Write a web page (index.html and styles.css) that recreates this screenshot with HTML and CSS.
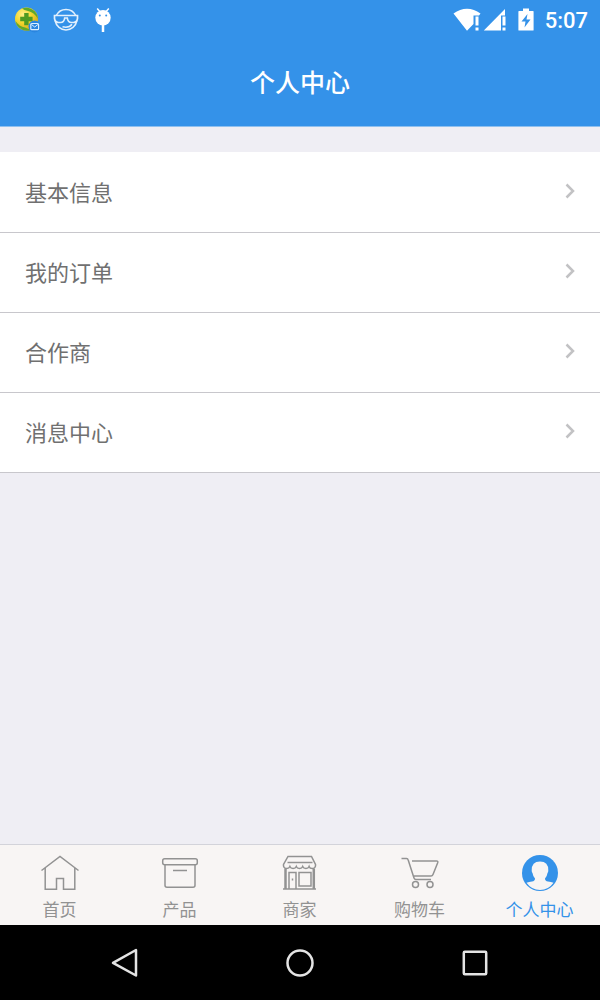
FILE: index.html
```
<!DOCTYPE html>
<html lang="zh-CN">
<head>
    <meta charset="UTF-8">
    <title>个人中心</title>
    <meta name="viewport" content="width=device-width, initial-scale=1.0">
    <link rel="stylesheet" href="styles.css">
</head>
<body>
    <header>
        <div class="status-bar">
            <div class="notifications">
                <svg width="26" height="26" viewBox="0 0 26 26" aria-hidden="true">
                    <defs>
                        <radialGradient id="ball" cx="0.35" cy="0.3" r="0.75">
                            <stop offset="0" stop-color="#fff08a"/>
                            <stop offset="0.5" stop-color="#f2d62c"/>
                            <stop offset="1" stop-color="#d3a51a"/>
                        </radialGradient>
                    </defs>
                    <circle cx="12.500" cy="12" r="11.500" fill="url(#ball)"/>
                    <path d="M8 1.500Q15-1 21 4.500Q24 8 24 12Q20 5 14 4Q10 3.200 8 1.500z" fill="#5ea82c"/>
                    <path d="M1.500 14Q5 19.500 11 20.500L17 23Q10 25 5 20.500Q2 18 1.500 14z" fill="#5ea82c"/>
                    <path d="M10.200 6h4.400v3.800h4v4.400h-4v4h-4.400v-4h-4V9.800h4z" fill="#4f9a22"/>
                    <circle cx="20.500" cy="19.500" r="6" fill="#2a85df"/>
                    <rect x="16.800" y="16.500" width="7.800" height="6.200" rx="1" fill="none" stroke="#dcefff" stroke-width="1.200"/>
                    <path d="M17.500 17.500l3.200 2.500 3.200-2.500" fill="none" stroke="#dcefff"/>
                </svg>
                <svg width="26" height="26" viewBox="0 0 26 26" fill="none" stroke="#e2f0fd" stroke-width="1.500" aria-hidden="true">
                    <path d="M3.200 8.500a11 11 0 0 1 19.600 0M2.200 14a11 11 0 0 0 21.600 0"/>
                    <path d="M1.500 8.500h23v3q-.6 4-4 4h-2q-3.600 0-4.200-4.500h-2.600q-.6 4.500-4.200 4.500h-2q-3.400 0-4-4z" stroke-width="1.700"/>
                    <path d="M9.500 19.800q6.500 1.500 9.500-2.500"/>
                </svg>
                <svg width="18" height="26" viewBox="0 0 18 26" aria-hidden="true">
                    <path d="M3.200 1.500l2.600 3M14.800 1.500l-2.600 3" stroke="#fff" stroke-width="1.500"/>
                    <circle cx="9" cy="10.800" r="7.700" fill="#fff"/>
                    <path d="M9 17v8" stroke="#fff" stroke-width="2.500"/>
                    <circle cx="5.800" cy="8.500" r="1" fill="#3492e9"/>
                    <circle cx="12.200" cy="8.500" r="1" fill="#3492e9"/>
                </svg>
            </div>
            <div class="indicators">
                <svg width="28" height="26" viewBox="0 0 28 26" fill="#fff" aria-hidden="true">
                    <path d="M.5 6.500Q7 1.800 14 1.800T27.500 6.500L26 8.500h-5.500v8.500L14 23.700z"/>
                    <path d="M22.500 9.500h3v9h-3zM22.500 20.500h3v3h-3z"/>
                </svg>
                <svg width="24" height="26" viewBox="0 0 24 26" fill="#fff" aria-hidden="true">
                    <path d="M.8 23.500L22 2v6.500h-4v15z"/>
                    <path d="M19.500 9.500h3v9h-3zM19.500 20.500h3v3h-3z"/>
                </svg>
                <svg class="battery" width="16" height="26" viewBox="0 0 16 26" aria-hidden="true">
                    <path d="M5 1.500h6v2.500h4q.6 0 .6.600v18.300q0 .6-.6.600H1q-.6 0-.6-.600V4.600q0-.6.600-.6h4z" fill="#fff"/>
                    <path d="M9.500 7L3.500 14.500h4L6.500 20.500L12.500 12.500h-4z" fill="#3492e9"/>
                </svg>
                <span class="time">5:07</span>
            </div>
        </div>
        <h1>个人中心</h1>
    </header>

    <main>
        <ul class="menu">
            <li>
                <a href="#info">基本信息
                    <svg class="arrow" width="10" height="16" viewBox="0 0 10 16" aria-hidden="true"><path d="M1.500 1.500L8 8l-6.500 6.500"/></svg>
                </a>
            </li>
            <li>
                <a href="#orders">我的订单
                    <svg class="arrow" width="10" height="16" viewBox="0 0 10 16" aria-hidden="true"><path d="M1.500 1.500L8 8l-6.500 6.500"/></svg>
                </a>
            </li>
            <li>
                <a href="#partners">合作商
                    <svg class="arrow" width="10" height="16" viewBox="0 0 10 16" aria-hidden="true"><path d="M1.500 1.500L8 8l-6.500 6.500"/></svg>
                </a>
            </li>
            <li>
                <a href="#messages">消息中心
                    <svg class="arrow" width="10" height="16" viewBox="0 0 10 16" aria-hidden="true"><path d="M1.500 1.500L8 8l-6.500 6.500"/></svg>
                </a>
            </li>
        </ul>
    </main>

    <nav class="tabs">
        <a href="#home">
            <svg width="40" height="40" viewBox="0 0 40 40" aria-hidden="true">
                <path d="M1.500 17.500L20 3.500l18.500 14M5.200 15v21.300h11.300V25.500h7v10.800h11.300V15"/>
            </svg>
            首页
        </a>
        <a href="#products">
            <svg width="40" height="40" viewBox="0 0 40 40" aria-hidden="true">
                <rect x="2.700" y="5.700" width="34.600" height="6" rx="2"/>
                <path d="M5 11.700v20.600q0 2 2 2h26q2 0 2-2V11.700M13 17.500h14"/>
            </svg>
            产品
        </a>
        <a href="#shops">
            <svg width="40" height="40" viewBox="0 0 40 40" aria-hidden="true">
                <path d="M8 3.500h23.500l4 8v1.500q-.4 2.500-3.200 2.500-2.500 0-3.200-2-.8 2-3.200 2t-3.200-2q-.8 2-3.200 2t-3.200-2q-.8 2-3.200 2t-3.200-2q-.8 2-3.200 2-2.800 0-3.200-2.500v-1.500z"/>
                <path d="M7.500 9.500h25M3 36h33"/>
                <path d="M5.500 15.500V36M33.800 15.500V36" stroke-width="2.500"/>
                <path d="M9 36V19.500h7V36M19 19.500h12v13.500H19zM12.500 25.500v2"/>
            </svg>
            商家
        </a>
        <a href="#cart">
            <svg width="40" height="40" viewBox="0 0 40 40" aria-hidden="true">
                <path d="M1.500 5.500h5q1.300 0 1.700 1.500L14 25q.5 1.500 2 1.500h15M12 8h24.500q1.800 0 1.200 1.700L33 21.500q-.6 1.500-2 1.500H13.500"/>
                <circle cx="15.500" cy="31.500" r="3"/>
                <circle cx="30" cy="31.500" r="3"/>
            </svg>
            购物车
        </a>
        <a href="#me" class="active" aria-current="page">
            <svg width="40" height="40" viewBox="0 0 40 40" aria-hidden="true">
                <circle class="disc" cx="20" cy="20" r="18"/>
                <path class="person" d="M6.500 29.800q2.500-.8 5.500-1.200 3-.6 3-3.100-2-2-2.500-5.500-.8-1-.8-2.500Q11.500 8.500 20 8.500t8.300 9q0 1.500-.8 2.500-.5 3.500-2.500 5.500 0 2.500 3 3.100 3 .4 5.500 1.200Q28.500 37 20 37T6.500 29.800z"/>
            </svg>
            个人中心
        </a>
    </nav>

    <footer class="system-nav">
        <button type="button" aria-label="返回">
            <svg width="30" height="30" viewBox="0 0 30 30"><path d="M26 2v25.500L3 14.800z"/></svg>
        </button>
        <button type="button" aria-label="主屏幕">
            <svg width="30" height="30" viewBox="0 0 30 30"><circle cx="15" cy="15" r="12.500"/></svg>
        </button>
        <button type="button" aria-label="最近任务">
            <svg width="30" height="30" viewBox="0 0 30 30"><rect x="3.800" y="3.800" width="22.400" height="22.400" rx="1"/></svg>
        </button>
    </footer>
</body>
</html>
```
FILE: styles.css
```
* {
    box-sizing: border-box;
}
body {
    display: flex;
    flex-direction: column;
    min-height: 100vh;
    margin: 0;
    font-family: "Noto Sans CJK SC", sans-serif;
    background: #efeef4;
    color: #707070;
}
svg {
    flex: none;
    display: block;
}
a {
    color: inherit;
    text-decoration: none;
}

/* Header */
header {
    background: #3492e9;
    color: #fff;
    border-bottom: 1px solid #8fc0ef;
}
.status-bar {
    display: flex;
    justify-content: space-between;
    align-items: center;
    height: 40px;
    padding: 0 12px 0 14px;
}
.notifications {
    display: flex;
    gap: 13px;
}
.notifications svg:last-child {
    margin-left: 2px;
}
.indicators {
    display: flex;
    align-items: center;
    gap: 2px;
}
.battery {
    margin: 0 9px;
}
.time {
    padding-top: 2px;
    font-family: Roboto, sans-serif;
    font-size: 22px;
    font-weight: 500;
    line-height: 26px;
}
h1 {
    margin: 0;
    padding-bottom: 4px;
    font-size: 25px;
    font-weight: 500;
    line-height: 82px;
    text-align: center;
}

/* Menu list */
main {
    flex: 1;
}
.menu {
    list-style: none;
    margin: 25px 0 0;
    padding: 0;
    background: #fff;
    border-top: 1px solid #fff;
}
.menu a {
    display: flex;
    justify-content: space-between;
    align-items: center;
    height: 80px;
    padding: 0 25px 4px;
    border-bottom: 1px solid #c8c7cc;
    font-size: 22px;
}
.arrow path {
    fill: none;
    stroke: #c2c2c4;
    stroke-width: 2.5;
}

/* Bottom tabs */
.tabs {
    display: grid;
    grid-template-columns: repeat(5, 1fr);
    padding-top: 8px;
    background: #f8f5f4;
    border-top: 1px solid #d3d3da;
    color: #929292;
}
.tabs a {
    display: flex;
    flex-direction: column;
    align-items: center;
    gap: 3px;
    padding: 0 1px 3px 0;
    font-size: 17px;
    line-height: 26px;
}
.tabs svg {
    fill: none;
    stroke: currentColor;
    stroke-width: 1.5;
}
.tabs .active {
    color: #3492e9;
}
.tabs .disc {
    fill: #3492e9;
    stroke: none;
}
.tabs .person {
    fill: #f8f5f4;
    stroke: none;
}

/* Android navigation keys */
.system-nav {
    display: grid;
    grid-template-columns: repeat(3, 1fr);
    height: 75px;
    padding: 0 6.25%;
    background: #000;
}
.system-nav button {
    display: flex;
    justify-content: center;
    align-items: center;
    padding: 0;
    border: none;
    background: none;
    cursor: pointer;
}
.system-nav svg {
    fill: none;
    stroke: #e4e4e4;
    stroke-width: 2.5;
    stroke-linejoin: round;
}
```
